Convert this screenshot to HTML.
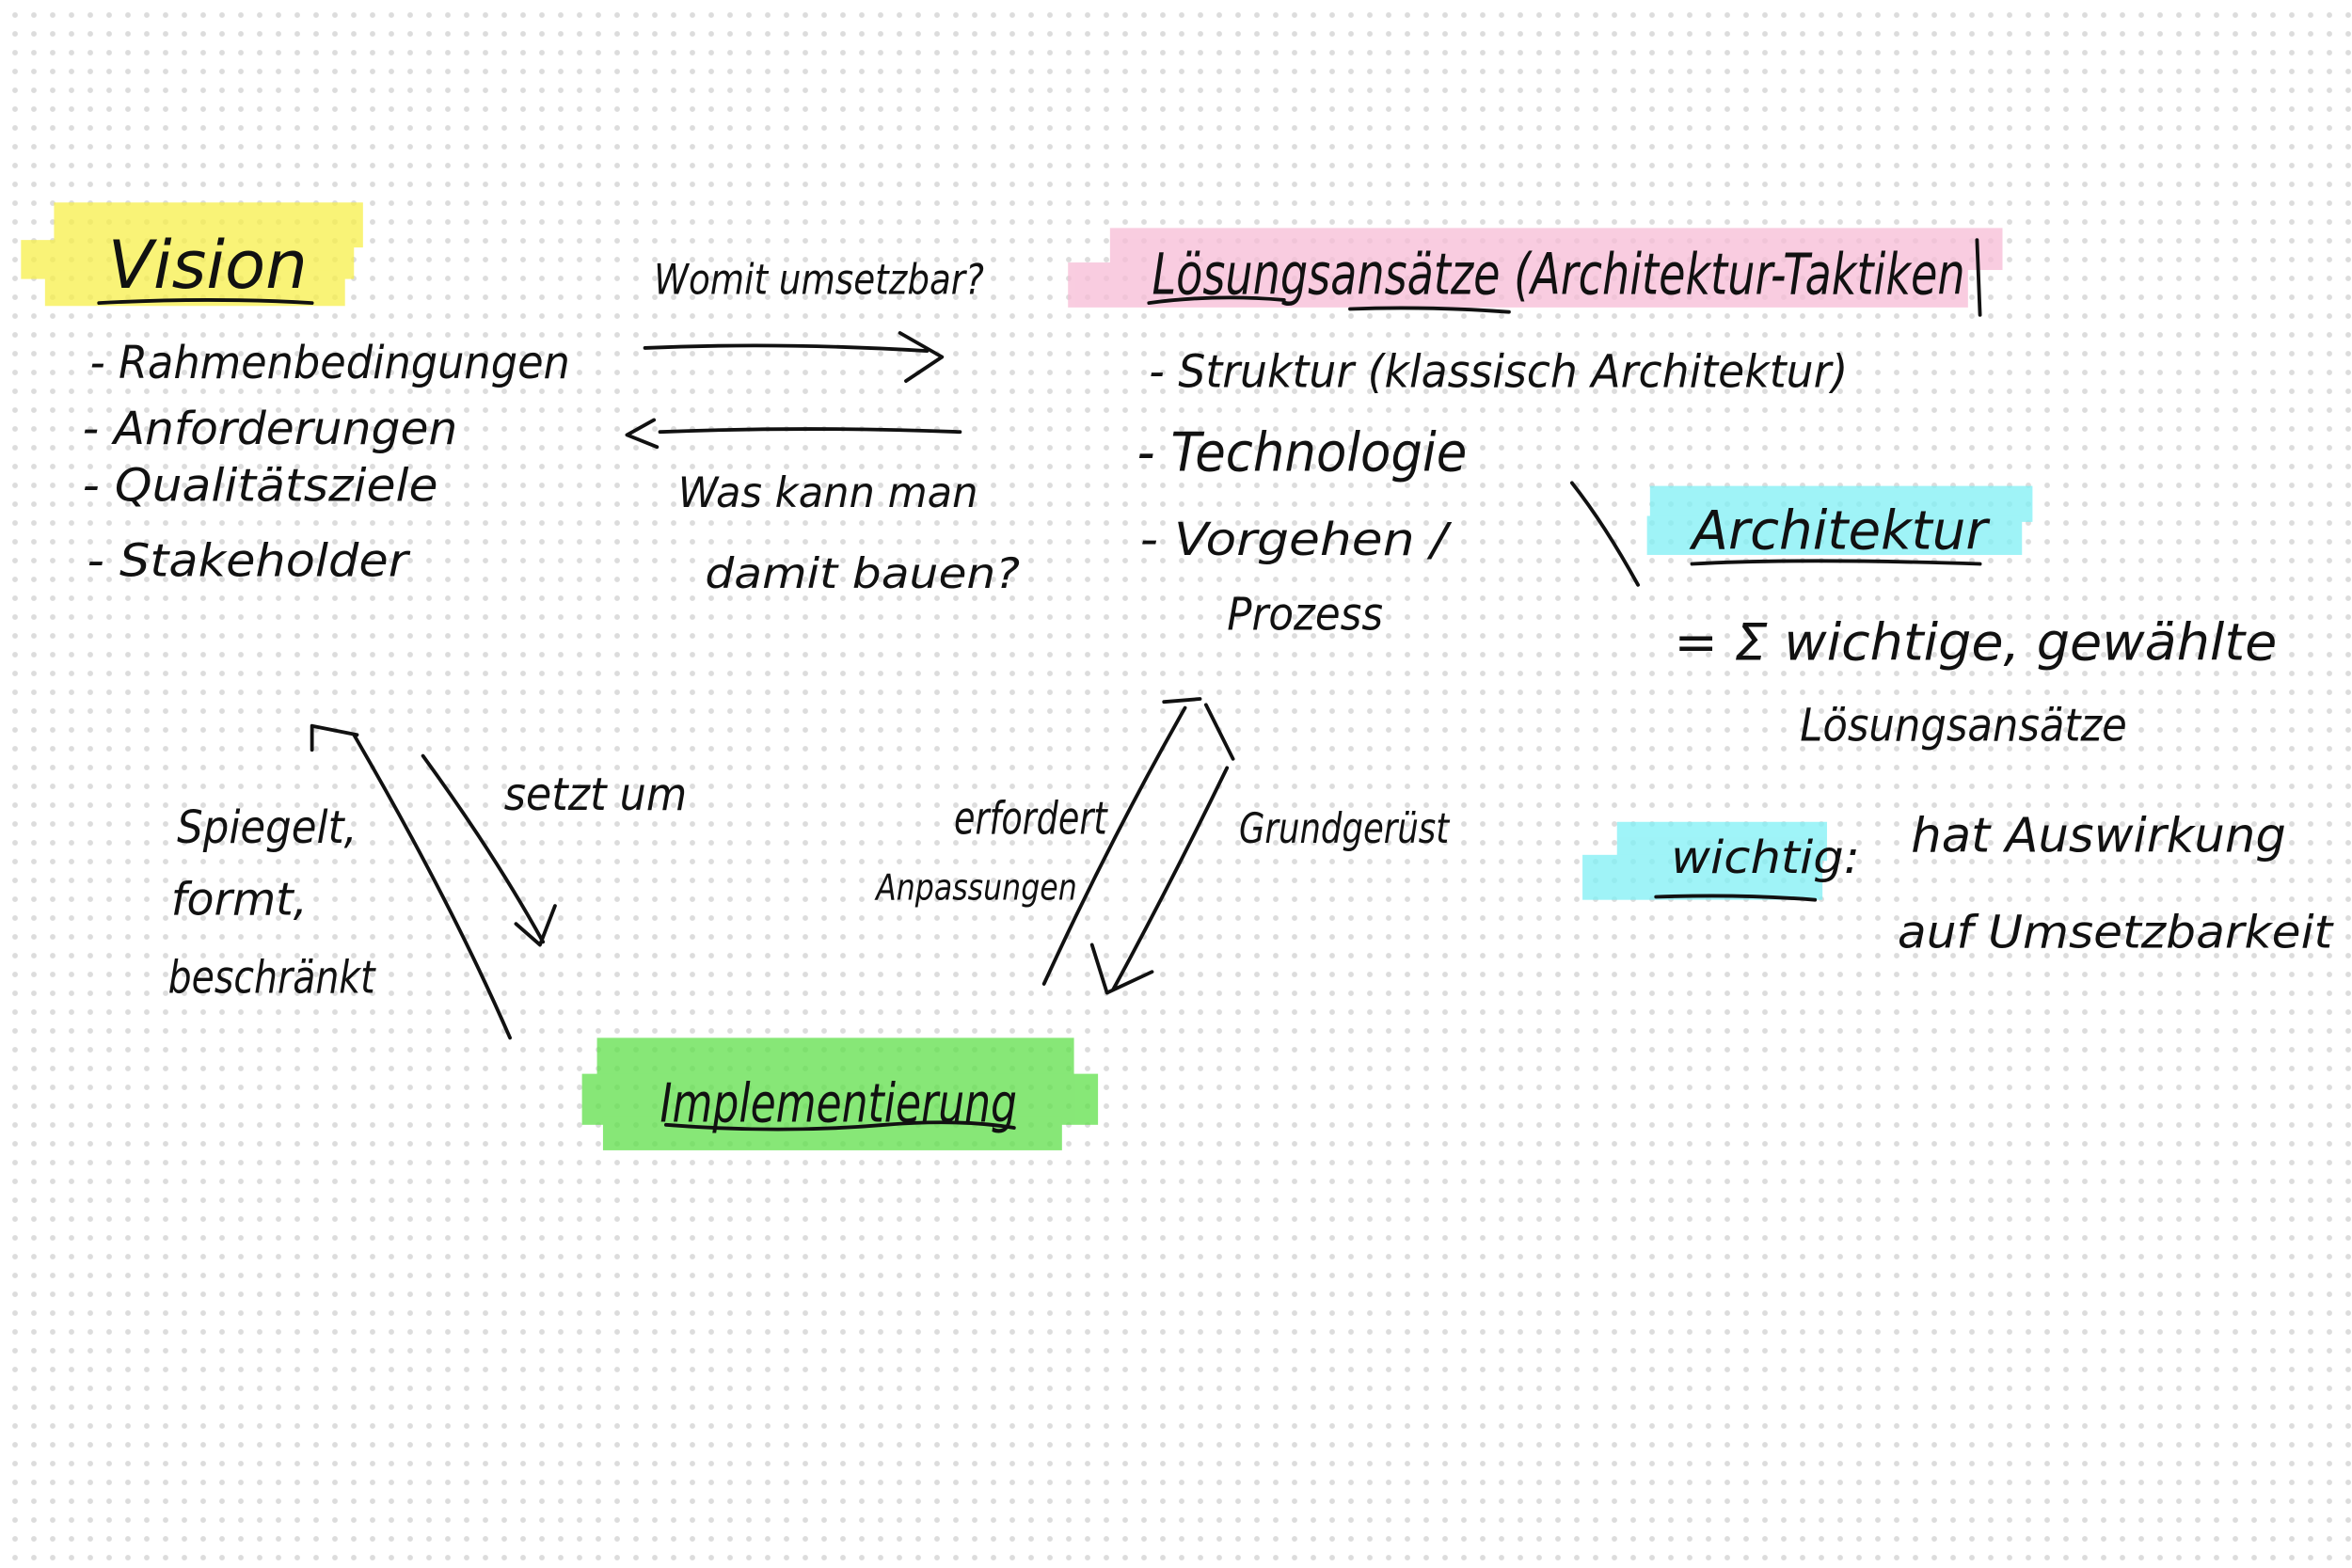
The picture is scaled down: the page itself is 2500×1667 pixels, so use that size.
<!DOCTYPE html>
<html><head><meta charset="utf-8">
<style>
html,body{margin:0;padding:0}
body{width:2500px;height:1667px;overflow:hidden;background-color:#fff;
background-image:radial-gradient(circle,#dcdcdc 2.6px,transparent 3.2px);
background-size:20px 20px;background-position:6px 6px;}
svg{position:absolute;left:0;top:0}
text{font-family:"DejaVu Sans","Liberation Sans",sans-serif;fill:#111;font-style:italic}
</style></head><body>
<svg width="2500" height="1667" viewBox="0 0 1568 1045.5" xmlns="http://www.w3.org/2000/svg">
<g opacity="0.75">
<rect x="36" y="135" width="206" height="30" fill="#f7ef4a"/>
<rect x="14" y="160" width="222" height="26" fill="#f7ef4a"/>
<rect x="30" y="180" width="200" height="24" fill="#f7ef4a"/>
<rect x="740" y="152" width="595" height="28" fill="#f7bcd6"/>
<rect x="712" y="175" width="600" height="30" fill="#f7bcd6"/>
<rect x="1100" y="324" width="255" height="24" fill="#7ff0f5"/>
<rect x="1098" y="344" width="250" height="26" fill="#7ff0f5"/>
<rect x="1078" y="548" width="140" height="26" fill="#7ff0f5"/>
<rect x="1055" y="570" width="160" height="30" fill="#7ff0f5"/>
<rect x="398" y="692" width="318" height="28" fill="#5fe04a"/>
<rect x="388" y="716" width="344" height="34" fill="#5fe04a"/>
<rect x="402" y="745" width="306" height="22" fill="#5fe04a"/>
</g>
<g font-size="30" lengthAdjust="spacingAndGlyphs">
<text x="72" y="192" font-size="44" textLength="133" lengthAdjust="spacingAndGlyphs">Vision</text>
<text x="60" y="252" textLength="320" lengthAdjust="spacingAndGlyphs">- Rahmenbedingungen</text>
<text x="55" y="296" textLength="250" lengthAdjust="spacingAndGlyphs">- Anforderungen</text>
<text x="55" y="334" textLength="237" lengthAdjust="spacingAndGlyphs">- Qualitätsziele</text>
<text x="58" y="384" textLength="214" lengthAdjust="spacingAndGlyphs">- Stakeholder</text>
<text x="436" y="196" font-size="28" textLength="220" lengthAdjust="spacingAndGlyphs">Womit umsetzbar?</text>
<text x="452" y="338" font-size="28" textLength="200" lengthAdjust="spacingAndGlyphs">Was kann man</text>
<text x="470" y="392" font-size="28" textLength="210" lengthAdjust="spacingAndGlyphs">damit bauen?</text>
<text x="768" y="196" font-size="38" textLength="542" lengthAdjust="spacingAndGlyphs">Lösungsansätze (Architektur-Taktiken</text>
<text x="766" y="258" textLength="466" lengthAdjust="spacingAndGlyphs">- Struktur (klassisch Architektur)</text>
<text x="758" y="314" font-size="36" textLength="220" lengthAdjust="spacingAndGlyphs">- Technologie</text>
<text x="760" y="370" textLength="205" lengthAdjust="spacingAndGlyphs">- Vorgehen /</text>
<text x="818" y="420" textLength="104" lengthAdjust="spacingAndGlyphs">Prozess</text>
<text x="1128" y="366" font-size="36" textLength="197" lengthAdjust="spacingAndGlyphs">Architektur</text>
<text x="1116" y="440" font-size="34" textLength="402" lengthAdjust="spacingAndGlyphs">= Σ wichtige, gewählte</text>
<text x="1200" y="494" textLength="218" lengthAdjust="spacingAndGlyphs">Lösungsansätze</text>
<text x="1114" y="582" textLength="126" lengthAdjust="spacingAndGlyphs">wichtig:</text>
<text x="1274" y="568" font-size="32" textLength="250" lengthAdjust="spacingAndGlyphs">hat Auswirkung</text>
<text x="1265" y="632" textLength="290" lengthAdjust="spacingAndGlyphs">auf Umsetzbarkeit</text>
<text x="118" y="562" textLength="120" lengthAdjust="spacingAndGlyphs">Spiegelt,</text>
<text x="114" y="610" textLength="91" lengthAdjust="spacingAndGlyphs">formt,</text>
<text x="112" y="662" textLength="138" lengthAdjust="spacingAndGlyphs">beschränkt</text>
<text x="336" y="540" textLength="122" lengthAdjust="spacingAndGlyphs">setzt um</text>
<text x="636" y="556" textLength="102" lengthAdjust="spacingAndGlyphs">erfordert</text>
<text x="584" y="600" font-size="24" textLength="134" lengthAdjust="spacingAndGlyphs">Anpassungen</text>
<text x="826" y="562" font-size="28" textLength="140" lengthAdjust="spacingAndGlyphs">Grundgerüst</text>
<text x="440" y="748" font-size="36" textLength="238" lengthAdjust="spacingAndGlyphs">Implementierung</text>
</g>
<g fill="none" stroke="#111" stroke-width="2.4" stroke-linecap="round" stroke-linejoin="round">
<path d="M66 202 Q140 198 208 202"/>
<path d="M766 202 Q810 196 856 200 M900 206 Q950 204 1006 208"/>
<path d="M1128 376 Q1200 372 1320 376"/>
<path d="M1104 598 Q1160 596 1210 600"/>
<path d="M444 750 Q520 756 590 750 Q640 746 676 752"/>
<path d="M1318 160 L1320 210"/>
<path d="M430 232 Q520 228 618 234 M600 222 L628 238 L604 254"/>
<path d="M640 288 Q540 284 440 288 M436 280 L418 290 L438 298"/>
<path d="M1048 322 Q1070 350 1092 390"/>
<path d="M208 500 L208 484 L238 490"/>
<path d="M236 490 Q300 600 340 692"/>
<path d="M282 504 Q330 570 362 628 M344 616 L360 630 L370 604"/>
<path d="M776 468 L800 466 M804 470 L822 506"/>
<path d="M790 472 Q740 560 696 656"/>
<path d="M818 512 Q780 590 742 660 M728 630 L738 662 L768 648"/>
</g>
</svg>
</body></html>
